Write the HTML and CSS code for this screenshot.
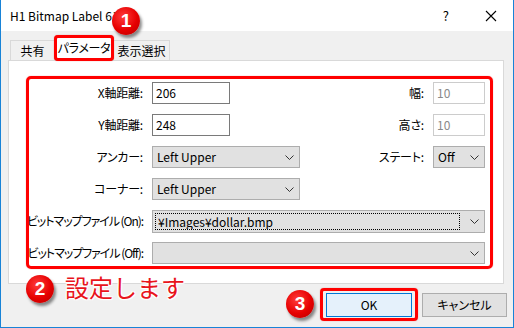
FILE: index.html
```html
<!DOCTYPE html>
<html lang="ja">
<head>
<meta charset="utf-8">
<title>H1 Bitmap Label 611</title>
<link rel="stylesheet" href="styles.css">
</head>
<body>
<div class="window">
  <div class="titlebar">
    <span class="title">H1 Bitmap Label 611</span>
    <div class="title-btns">
      <span class="help">?</span>
      <svg class="close" width="12" height="12" viewBox="0 0 12 12"><path d="M1 1L11 11M11 1L1 11" stroke="#000" stroke-width="1.1" fill="none"/></svg>
    </div>
  </div>
  <div class="tabs">
    <div class="tab t1">共有</div>
    <div class="tab active"><span>パラメータ</span></div>
    <div class="tab t3">表示選択</div>
  </div>
  <div class="panel">
    <div class="frame">
      <div class="row">
        <span class="lbl">X軸距離:</span>
        <div class="input w78">206</div>
        <span class="lbl-r">幅:</span>
        <div class="input disabled w52">10</div>
      </div>
      <div class="row">
        <span class="lbl">Y軸距離:</span>
        <div class="input w78">248</div>
        <span class="lbl-r">高さ:</span>
        <div class="input disabled w52">10</div>
      </div>
      <div class="row">
        <span class="lbl">アンカー:</span>
        <div class="select w148"><span class="val">Left Upper</span><svg class="chev" width="9" height="5" viewBox="0 0 9 5"><path d="M0.5 0.5L4.5 4.5L8.5 0.5" stroke="#333" fill="none"/></svg></div>
        <span class="lbl-r">ステート:</span>
        <div class="select w52"><span class="val">Off</span><svg class="chev" width="9" height="5" viewBox="0 0 9 5"><path d="M0.5 0.5L4.5 4.5L8.5 0.5" stroke="#333" fill="none"/></svg></div>
      </div>
      <div class="row">
        <span class="lbl">コーナー:</span>
        <div class="select w148"><span class="val">Left Upper</span><svg class="chev" width="9" height="5" viewBox="0 0 9 5"><path d="M0.5 0.5L4.5 4.5L8.5 0.5" stroke="#333" fill="none"/></svg></div>
      </div>
      <div class="row">
        <span class="lbl narrow"><span>ビットマップファイル (On):</span></span>
        <div class="select w333 focus"><span class="val focusbox">¥Images¥dollar.bmp</span><svg class="chev" width="9" height="5" viewBox="0 0 9 5"><path d="M0.5 0.5L4.5 4.5L8.5 0.5" stroke="#333" fill="none"/></svg></div>
      </div>
      <div class="row">
        <span class="lbl narrow"><span>ビットマップファイル (Off):</span></span>
        <div class="select w333"><span class="val"></span><svg class="chev" width="9" height="5" viewBox="0 0 9 5"><path d="M0.5 0.5L4.5 4.5L8.5 0.5" stroke="#333" fill="none"/></svg></div>
      </div>
    </div>
  </div>
  <div class="footer">
    <div class="ok-wrap"><button class="btn ok">OK</button></div>
    <button class="btn cancel">キャンセル</button>
  </div>

  <div class="badge b1">1</div>
  <div class="badge b2">2</div>
  <div class="note">設定します</div>
  <div class="badge b3">3</div>
</div>
</body>
</html>
```
FILE: styles.css
```css
* { box-sizing: border-box; }
html, body { margin: 0; padding: 0; }
body {
  width: 514px;
  height: 328px;
  overflow: hidden;
  font-family: "Noto Sans CJK JP", "Noto Sans", sans-serif;
  font-size: 12px;
  color: #000;
  background: #fff;
}
.window {
  position: relative;
  width: 514px;
  height: 328px;
  background: #f0f0f0;
  border: 1px solid #1883d7;
  border-top: 0;
  display: flex;
  flex-direction: column;
}
.titlebar {
  height: 31px;
  background: #fff;
  display: flex;
  align-items: center;
  padding-left: 9px;
  flex: none;
}
.title { font-size: 12px; line-height: 16px; }
.title-btns {
  margin-left: auto;
  display: flex;
  align-items: center;
}
.help { font-size: 13px; line-height: 16px; margin-right: 36px; }
.close { margin-right: 16px; }

.tabs {
  height: 30px;
  display: flex;
  align-items: flex-end;
  padding-left: 9px;
  margin-bottom: -1px;
  position: relative;
  z-index: 2;
  flex: none;
}
.tab {
  height: 20px;
  border: 1px solid #d9d9d9;
  border-bottom: 0;
  background: #f0f0f0;
  display: flex;
  align-items: center;
  justify-content: center;
  line-height: 16px;
  margin-bottom: 1px;
}
.t1 { width: 45px; }
.t3 { width: 57px; margin-left: -1px; }
.tab.active {
  width: 60px;
  height: 26px;
  margin: 0 0 0 -1px;
  background: #fff;
  border: 3px solid #f00;
  border-radius: 4px;
  box-shadow: 0 0 1px rgba(200,0,0,.6);
  position: relative;
  z-index: 3;
}
.tab.active span { font-feature-settings: "palt"; letter-spacing: -0.3px; }

.panel {
  margin: 0 9px 0 7px;
  height: 224px;
  background: #fff;
  border: 1px solid #d9d9d9;
  padding: 15px 10px 15px 17px;
  flex: none;
}
.frame {
  height: 193px;
  border: 3px solid #f00;
  border-radius: 5px;
  box-shadow: 0 0 1px rgba(200,0,0,.6);
  padding: 3px 5px 0 0;
  display: flex;
  flex-direction: column;
  gap: 10px;
}
.row {
  display: flex;
  align-items: center;
  height: 22px;
}
.lbl {
  width: 114px;
  flex: none;
  text-align: right;
  margin-right: 9px;
  white-space: nowrap;
  font-feature-settings: "palt";
  letter-spacing: -0.2px;
  line-height: 16px;
}
.lbl.narrow {
  display: flex;
  justify-content: flex-end;
  letter-spacing: -1.05px;
}
.lbl.narrow span { flex: none; }
.lbl-r {
  margin-left: auto;
  margin-right: 9px;
  white-space: nowrap;
  font-feature-settings: "palt";
  letter-spacing: -0.2px;
  line-height: 16px;
}
.input {
  height: 22px;
  border: 1px solid #7a7a7a;
  background: #fff;
  padding-left: 3px;
  line-height: 19px;
  flex: none;
}
.input.disabled { border-color: #cccccc; color: #8a8a8a; }
.w78 { width: 78px; }
.w52 { width: 52px; }
.w148 { width: 148px; }
.w333 { width: 333px; }
.select {
  height: 22px;
  border: 1px solid #adadad;
  background: #e1e1e1;
  display: flex;
  align-items: center;
  padding-left: 4px;
  padding-right: 5px;
  flex: none;
  line-height: 16px;
}
.select .val { flex: 1; white-space: nowrap; overflow: hidden; }
.select.focus { height: 23px; padding-left: 2px; }
.focusbox {
  border: 1px dotted #000;
  height: 17px;
  margin-right: 10px;
  padding-left: 2px;
  line-height: 15px;
}
.chev { flex: none; }

.footer {
  display: flex;
  justify-content: flex-end;
  align-items: flex-start;
  padding-right: 6px;
  margin-top: 4px;
  gap: 4px;
}
.ok-wrap {
  border: 3px solid #f00;
  border-radius: 4px;
  padding: 2px 3px 1px 3px;
  box-shadow: 0 0 1px rgba(200,0,0,.6);
}
.btn {
  height: 24px;
  font-family: "Noto Sans CJK JP", "Noto Sans", sans-serif;
  font-size: 12px;
  line-height: 16px;
  padding: 0;
  color: #000;
  display: block;
}
.ok { width: 86px; border: 1px solid #0078d7; background: #e5f1fb; }
.cancel { width: 85px; border: 1px solid #adadad; background: #e1e1e1; margin-top: 5px; font-feature-settings: "palt"; }

.badge {
  position: absolute;
  width: 28px;
  height: 28px;
  border-radius: 50%;
  background: radial-gradient(circle at 40% 35%, #ff3b3b 0%, #e60000 55%, #b30000 100%);
  box-shadow: 2px 3px 3px rgba(0,0,0,.45);
  color: #fff;
  font-family: "Liberation Sans", "Noto Sans", sans-serif;
  font-weight: 700;
  font-size: 19px;
  line-height: 28px;
  text-align: center;
  z-index: 5;
}
.b1 { left: 111px; top: 7px; }
.b2 { left: 25px; top: 275px; }
.b3 { left: 285px; top: 290px; }
.note {
  position: absolute;
  left: 64px;
  top: 272px;
  font-size: 24px;
  line-height: 30px;
  color: #e8141c;
  text-shadow: 0 0 2px #fff, 1px 1px 1px #fff, -1px -1px 1px #fff, 1px -1px 1px #fff, -1px 1px 1px #fff;
  z-index: 5;
}
```
